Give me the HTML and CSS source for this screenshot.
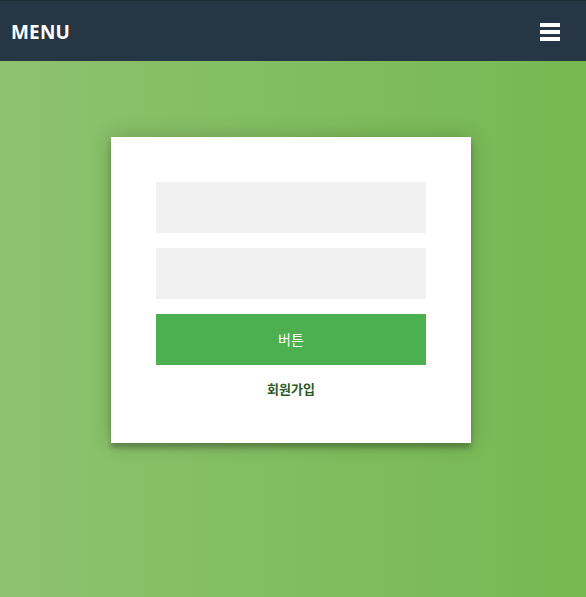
FILE: index.html
```html
<!DOCTYPE html>
<html lang="ko">
<head>
<meta charset="utf-8">
<title>Login</title>
<link rel="stylesheet" href="styles.css">
</head>
<body>
<header class="topbar">
  <span class="brand">MENU</span>
  <button class="burger" aria-label="menu">
    <span></span><span></span><span></span>
  </button>
</header>
<main class="page">
  <form class="card">
    <input class="field" type="text">
    <input class="field" type="password">
    <button class="submit" type="button">버튼</button>
    <p class="message"><a href="#">회원가입</a></p>
  </form>
</main>
</body>
</html>
```
FILE: styles.css
```css
html, body {
  margin: 0;
  padding: 0;
  height: 100%;
}
body {
  font-family: "Open Sans", "Noto Sans CJK KR", sans-serif;
  background: linear-gradient(to left, #76b852, #8dc26f);
  min-height: 597px;
  display: flex;
  flex-direction: column;
}
.topbar {
  height: 60px;
  border-top: 1px solid #1f2a33;
  background: #263645;
  display: flex;
  align-items: center;
  justify-content: space-between;
  padding: 0 26px 0 11px;
}
.brand {
  color: #ffffff;
  font-weight: 700;
  font-size: 19px;
  letter-spacing: 0.2px;
  margin-top: 2px;
}
.burger {
  background: none;
  border: 0;
  padding: 0;
  width: 20px;
  display: flex;
  flex-direction: column;
  gap: 3px;
  margin-top: 1px;
}
.burger span {
  display: block;
  height: 4px;
  background: #ffffff;
}
.page {
  display: flex;
  justify-content: center;
  padding: 76px 4px 0 0;
}
.card {
  width: 360px;
  box-sizing: border-box;
  background: #ffffff;
  padding: 45px 45px 45px;
  text-align: center;
  box-shadow: 0 0 20px 0 rgba(0,0,0,0.2), 0 5px 5px 0 rgba(0,0,0,0.24);
  display: flex;
  flex-direction: column;
}
.field {
  display: block;
  height: 51px;
  box-sizing: border-box;
  background: #f1f1f1;
  border: 0;
  margin: 0 0 15px;
  padding: 15px;
  font-size: 14px;
  outline: none;
}
.submit {
  height: 51px;
  background: #4caf50;
  border: 0;
  color: #ffffff;
  font-family: "Noto Sans CJK KR", sans-serif;
  font-size: 14px;
  padding: 0 0 2px;
}
.message {
  margin: 15px 0 0;
  height: 18px;
  line-height: 18px;
  font-size: 13px;
}
.message a {
  color: #2a5a25;
  font-weight: 700;
  text-decoration: none;
  font-family: "Noto Sans CJK KR", sans-serif;
}
```
